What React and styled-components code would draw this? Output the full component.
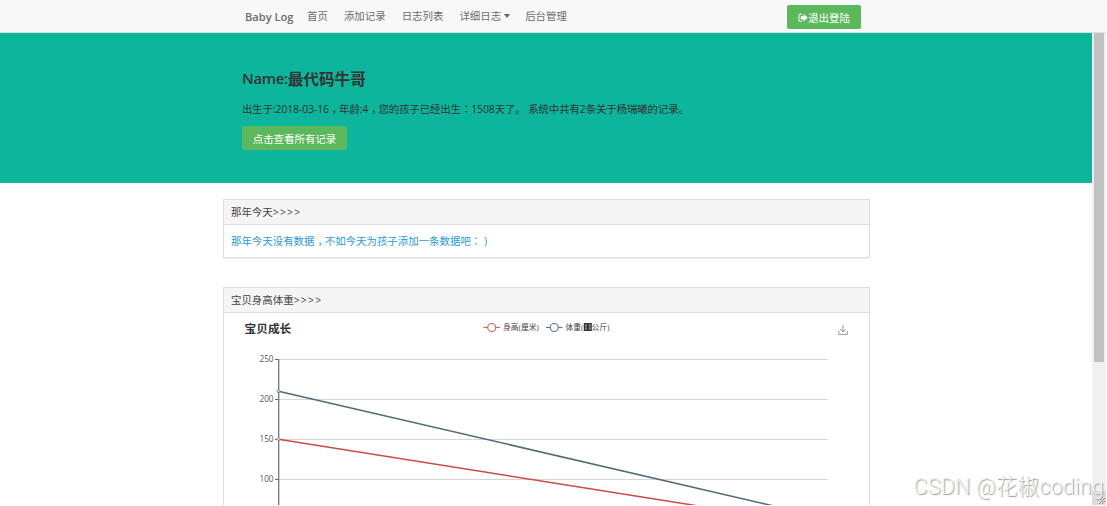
import React from 'react'
import styled, {
  createGlobalStyle,
} from 'styled-components'

const ticks = [
  { label: '250', y: 47.5 },
  { label: '200', y: 87.5 },
  { label: '150', y: 127.5 },
  { label: '100', y: 167.5 },
]

function App() {
  return (
    <>
      <GlobalStyle />
      <Page>
        <Navbar>
          <Brand>Baby Log</Brand>
          <NavLinks>
            <NavLink>首页</NavLink>
            <NavLink>添加记录</NavLink>
            <NavLink>日志列表</NavLink>
            <NavLink>
              详细日志
              <Caret />
            </NavLink>
            <NavLink>后台管理</NavLink>
          </NavLinks>
          <LogoutButton>
            <SignOutIcon />
            退出登陆
          </LogoutButton>
        </Navbar>
        <Body>
          <Content>
            <Banner>
              <Name>
                <NameLabel>Name:</NameLabel>
                最代码牛哥
              </Name>
              <Summary>
                出生于:2018-03-16
                <Comma>，</Comma>
                年龄:4
                <Comma>，</Comma>
                您的孩子已经出生
                <Colon>：</Colon>
                1508天了。 系统中共有2条关于杨瑞曦的记录。
              </Summary>
              <RecordsButton>点击查看所有记录</RecordsButton>
            </Banner>
            <Panels>
              <Panel>
                <PanelHeading>
                  那年今天
                  <Arrows>&gt;&gt;&gt;&gt;</Arrows>
                </PanelHeading>
                <PanelBody>
                  <PanelLink>
                    那年今天没有数据
                    <Comma>，</Comma>
                    不如今天为孩子添加一条数据吧
                    <Colon>：</Colon>
                    &nbsp;)
                  </PanelLink>
                </PanelBody>
              </Panel>
              <Panel>
                <PanelHeading>
                  宝贝身高体重
                  <Arrows>&gt;&gt;&gt;&gt;</Arrows>
                </PanelHeading>
                <GrowthChart />
              </Panel>
            </Panels>
          </Content>
          <Scrollbar>
            <Thumb />
            <Grip viewBox="0 0 14 14">
              <path d="M7 13L13 7M10 13L13 10" />
            </Grip>
          </Scrollbar>
        </Body>
        <Watermark>CSDN @花椒coding</Watermark>
      </Page>
    </>
  )
}

function SignOutIcon() {
  return (
    <Icon viewBox="0 0 10 10">
      <path
        d="M4 1.2H2.2Q0.9 1.2 0.9 2.5V7.1Q0.9 8.4 2.2 8.4H4"
        fill="none"
        stroke="#fff"
        strokeWidth="1"
      />
      <path
        d="M2.8 3.2H5.6V1L9.8 4.8L5.6 8.6V6.4H2.8Z"
        fill="#fff"
      />
    </Icon>
  )
}

function GrowthChart() {
  return (
    <Chart viewBox="0 1 645 193">
      <ChartTitle x="20.5" y="20.5">宝贝成长</ChartTitle>

      <g fill="#fff" stroke="#d9605c" strokeWidth="1.1">
        <path d="M259.5 15.5H276" />
        <circle cx="267.7" cy="15.5" r="4" />
      </g>
      <LegendText x="279" y="17.8">身高(厘米)</LegendText>
      <g fill="#fff" stroke="#5b7586" strokeWidth="1.1">
        <path d="M322 15.5H338.5" />
        <circle cx="330.2" cy="15.5" r="4" />
      </g>
      <LegendText x="341.5" y="17.8">体重(</LegendText>
      <rect x="359.8" y="11" width="8" height="8" fill="#333" />
      <path
        d="M361 13H363M361 17H363M362 13V17M364.8 13H366.8M364.8 17H366.8M365.8 13V17"
        stroke="#ccc"
        strokeWidth="0.7"
      />
      <LegendText x="367.6" y="17.8">公斤)</LegendText>

      <path
        d="M619 13V20M616 17L619 20L622 17M614.8 19V22.4H623.4V19"
        fill="none"
        stroke="#999"
        strokeWidth="1"
      />

      {ticks.map(({ label, y }) => (
        <g key={label}>
          <path d={`M55 ${y}H603.5`} stroke="#d6d6d6" />
          <path d={`M51 ${y}H55`} stroke="#666" />
          <TickText x="49.5" y={y + 2}>{label}</TickText>
        </g>
      ))}
      <path d="M54.7 47V194" stroke="#777" strokeWidth="1.3" />

      <path d="M54.5 79.2L603 206.3" stroke="#536878" strokeWidth="1.5" />
      <path d="M54.5 127.2L603 214.4" stroke="#cb4b47" strokeWidth="1.5" />
      <circle cx="54.5" cy="79.2" r="1.4" fill="#fff" stroke="#536878" strokeWidth="0.8" />
      <circle cx="54.5" cy="127.2" r="1.4" fill="#fff" stroke="#cb4b47" strokeWidth="0.8" />
    </Chart>
  )
}

const GlobalStyle = createGlobalStyle`
  body {
    background: #fff;
    margin: 0;
    overflow: hidden;
  }
`

const Page = styled.div`
  color: #444;
  display: flex;
  flex-direction: column;
  font-family: 'Open Sans', 'Noto Sans CJK SC', sans-serif;
  font-size: 10.45px;
  height: 505px;
  overflow: hidden;
  position: relative;
  white-space: nowrap;
  width: 1106px;
`

const Navbar = styled.div`
  align-items: center;
  background: #f8f8f8;
  border-bottom: 1px solid #dedede;
  box-sizing: border-box;
  color: #6c6c6c;
  display: flex;
  flex-shrink: 0;
  height: 33px;
  padding: 0 245px;
`

const Brand = styled.div`
  font-size: 11.1px;
  font-weight: 600;
  margin-right: 13px;
  width: 49px;
`

const NavLinks = styled.div`
  display: flex;
  flex-grow: 1;
  gap: 16px;
  padding-bottom: 2px;
`

const NavLink = styled.div`
  align-items: center;
  display: flex;
`

const Caret = styled.div`
  border-left: 3.5px solid transparent;
  border-right: 3.5px solid transparent;
  border-top: 4px solid #666;
  margin: 1px -1px 0 3px;
`

const Button = styled.div`
  align-items: center;
  background: #5cb85c;
  border-radius: 2px;
  box-sizing: border-box;
  color: #fff;
  display: flex;
  height: 24px;
  justify-content: center;
`

const LogoutButton = styled(Button)`
  margin-top: 1px;
  padding-top: 2px;
  width: 74px;
`

const Icon = styled.svg`
  height: 10px;
  width: 10px;
`

const Body = styled.div`
  display: flex;
  flex-grow: 1;
  min-height: 0;
`

const Content = styled.div`
  flex-grow: 1;
  overflow: hidden;
`

const Banner = styled.div`
  background: #0cb59c;
  box-sizing: border-box;
  color: #333;
  height: 150px;
  padding: 34px 242px 0;
`

const Name = styled.div`
  align-items: center;
  display: flex;
  font-size: 15.6px;
  font-weight: 700;
  height: 22px;
`

const NameLabel = styled.span`
  font-size: 15px;
  font-weight: 600;
  letter-spacing: -0.35px;
`

const Summary = styled.div`
  height: 16px;
  letter-spacing: -0.12px;
  line-height: 16px;
  margin-top: 12px;
`

// half-width comma, padded back to a full em on both sides
const Comma = styled.span`
  font-feature-settings: 'halt';
  letter-spacing: 0;
  padding: 0 2px 0 3px;
`

const Colon = styled.span`
  font-family: 'Noto Sans CJK TC', sans-serif;
`

const RecordsButton = styled(Button)`
  margin-top: 9px;
  padding-top: 1px;
  width: 105px;
`

const Panels = styled.div`
  display: flex;
  flex-direction: column;
  gap: 29px;
  padding: 16px 222px 0 223px;
`

const Panel = styled.div`
  border: 1px solid #ddd;
  box-shadow: 0 1px 1px rgba(0, 0, 0, 0.05);
  box-sizing: border-box;
  width: 647px;
`

const PanelHeading = styled.div`
  align-items: center;
  background: #f5f5f5;
  border-bottom: 1px solid #ddd;
  box-sizing: border-box;
  display: flex;
  height: 25px;
  padding: 0 0 1px 7px;
`

const Arrows = styled.span`
  letter-spacing: 1.2px;
`

const PanelBody = styled.div`
  align-items: center;
  box-sizing: border-box;
  display: flex;
  height: 32px;
  padding: 0 0 1px 7px;
`

const PanelLink = styled.div`
  color: #2a9bd6;
`

const Chart = styled.svg`
  display: block;
  height: 193px;
  width: 645px;
`

const ChartTitle = styled.text`
  fill: #333;
  font-size: 11.7px;
  font-weight: 700;
`

const LegendText = styled.text`
  fill: #444;
  font-size: 7.8px;
`

const TickText = styled.text`
  fill: #555;
  font-size: 8.2px;
  text-anchor: end;
`

const Scrollbar = styled.div`
  background: #f0f0f0;
  display: flex;
  flex-direction: column;
  flex-shrink: 0;
  justify-content: space-between;
  width: 14px;
`

const Thumb = styled.div`
  background: #c1c1c1;
  height: 329px;
  margin: 0 2px;
`

const Grip = styled.svg`
  background: #dcdcdc;
  height: 14px;
  stroke: #888;
  width: 14px;
`

const Watermark = styled.div`
  bottom: 4px;
  color: #f2f2f2;
  font-family: Roboto, 'Noto Sans CJK SC', sans-serif;
  font-size: 21.5px;
  font-weight: 300;
  letter-spacing: 0.2px;
  line-height: 28px;
  position: absolute;
  right: 2px;
  text-shadow: 1px 1px 1px #999;
`

export default App
